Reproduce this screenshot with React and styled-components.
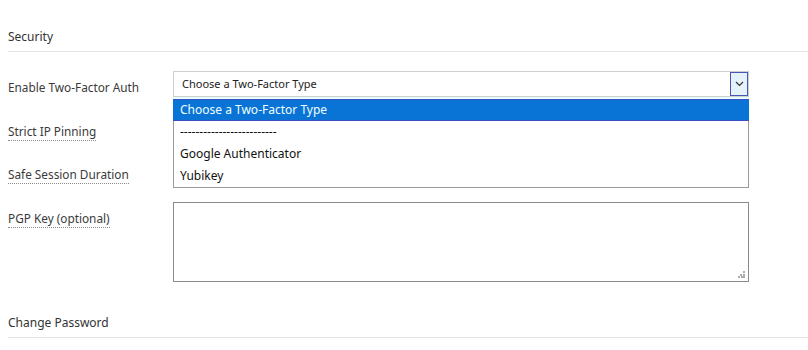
import React from "react";
import styled, { createGlobalStyle } from "styled-components";

const Global = createGlobalStyle`
  html, body { margin: 0; padding: 0; background: #fff; }
  body { font-family: "Noto Sans", "Open Sans", sans-serif; color: #333; }
`;

const Page = styled.div`
  width: 808px;
  height: 350px;
  overflow: hidden;
  padding: 0 0 0 8px;
  box-sizing: border-box;
  font-size: 12px;
  line-height: 16px;
`;

const SectionTitle = styled.div`
  font-size: 12px;
  line-height: 16px;
  color: #333;
  padding-top: ${(p) => p.$top}px;
  padding-bottom: 6px;
  border-bottom: 1px solid #e3e3e3;
`;

const Form = styled.div`
  display: grid;
  grid-template-columns: 165px 576px;
  margin-top: 19px;
`;

const Row = styled.div`
  display: contents;
`;

const LabelCell = styled.div`
  height: ${(p) => p.$h}px;
  padding-top: 8px;
  box-sizing: border-box;
  font-size: 11.8px;
  line-height: 16px;
`;

const Label = styled.span`
  color: #3a3a3a;
  padding-bottom: 1px;
  border-bottom: ${(p) => (p.$hint ? "1px dotted #8a8a8a" : "none")};
`;

const ControlCell = styled.div`
  height: ${(p) => p.$h}px;
  position: relative;
`;

const SelectBox = styled.div`
  height: 26px;
  box-sizing: border-box;
  border: 1px solid #cfcfcf;
  background: #fff;
  display: flex;
  align-items: center;
  padding-left: 8px;
  font-size: 11px;
  color: #222;
  position: relative;
  box-shadow: 0 1px 0 0 #dffcff, 0 2px 0 0 #eefeff;
`;

const ArrowBtn = styled.div`
  position: absolute;
  right: 0;
  top: 0;
  width: 18px;
  height: 24px;
  box-sizing: border-box;
  border: 1px solid #4657b8;
  background: #e6f2fb;
  display: flex;
  align-items: center;
  justify-content: center;
`;

const DropList = styled.ul`
  position: absolute;
  left: 0;
  top: 28px;
  width: 576px;
  margin: 0;
  padding: 0;
  list-style: none;
  box-sizing: border-box;
  border: 1px solid #9a9a9a;
  border-top: none;
  background: #fff;
  z-index: 5;
`;

const Option = styled.li`
  height: 22px;
  line-height: 20px;
  font-size: 12px;
  background: ${(p) => (p.$active ? "#0a74d6" : "transparent")};
  color: ${(p) => (p.$active ? "#f0ffff" : "#111")};
  border-top: 1px solid ${(p) => (p.$active ? "#3b4fc0" : "transparent")};
  border-bottom: 1px solid ${(p) => (p.$active ? "#3b4fc0" : "transparent")};
  margin: 0 ${(p) => (p.$active ? "-1px" : "0")};
  padding-left: ${(p) => (p.$active ? "7px" : "6px")};
  box-sizing: border-box;
  white-space: nowrap;
  overflow: hidden;
`;

const TextArea = styled.div`
  height: 80px;
  box-sizing: border-box;
  border: 1px solid #8a8a8a;
  background: #fff;
  position: relative;
`;

const Grip = styled.svg`
  position: absolute;
  right: 3px;
  bottom: 3px;
`;

export default function App() {
  return (
    <Page>
      <Global />
      <SectionTitle $top={29}>Security</SectionTitle>
      <Form>
        <Row>
          <LabelCell $h={44}>
            <Label>Enable Two-Factor Auth</Label>
          </LabelCell>
          <ControlCell $h={44}>
            <SelectBox>
              Choose a Two-Factor Type
              <ArrowBtn>
                <svg width="9" height="6" viewBox="0 0 9 6">
                  <path d="M1 1 L4.5 4.5 L8 1" fill="none" stroke="#333" strokeWidth="1.2" />
                </svg>
              </ArrowBtn>
            </SelectBox>
            <DropList>
              <Option $active>Choose a Two-Factor Type</Option>
              <Option>-------------------------</Option>
              <Option>Google Authenticator</Option>
              <Option>Yubikey</Option>
            </DropList>
          </ControlCell>
        </Row>
        <Row>
          <LabelCell $h={43}>
            <Label $hint>Strict IP Pinning</Label>
          </LabelCell>
          <ControlCell $h={43} />
        </Row>
        <Row>
          <LabelCell $h={44}>
            <Label $hint>Safe Session Duration</Label>
          </LabelCell>
          <ControlCell $h={44} />
        </Row>
        <Row>
          <LabelCell $h={80}>
            <Label $hint>PGP Key (optional)</Label>
          </LabelCell>
          <ControlCell $h={80}>
            <TextArea>
              <Grip width="7" height="7" viewBox="0 0 7 7">
                <rect x="5" y="0" width="2" height="2" fill="#aaa" />
                <rect x="2" y="3" width="2" height="2" fill="#aaa" />
                <rect x="5" y="3" width="2" height="2" fill="#aaa" />
                <rect x="0" y="5" width="2" height="2" fill="#aaa" />
                <rect x="3" y="5" width="2" height="2" fill="#aaa" />
                <rect x="5" y="5" width="2" height="2" fill="#aaa" />
              </Grip>
            </TextArea>
          </ControlCell>
        </Row>
      </Form>
      <SectionTitle $top={33}>Change Password</SectionTitle>
    </Page>
  );
}
